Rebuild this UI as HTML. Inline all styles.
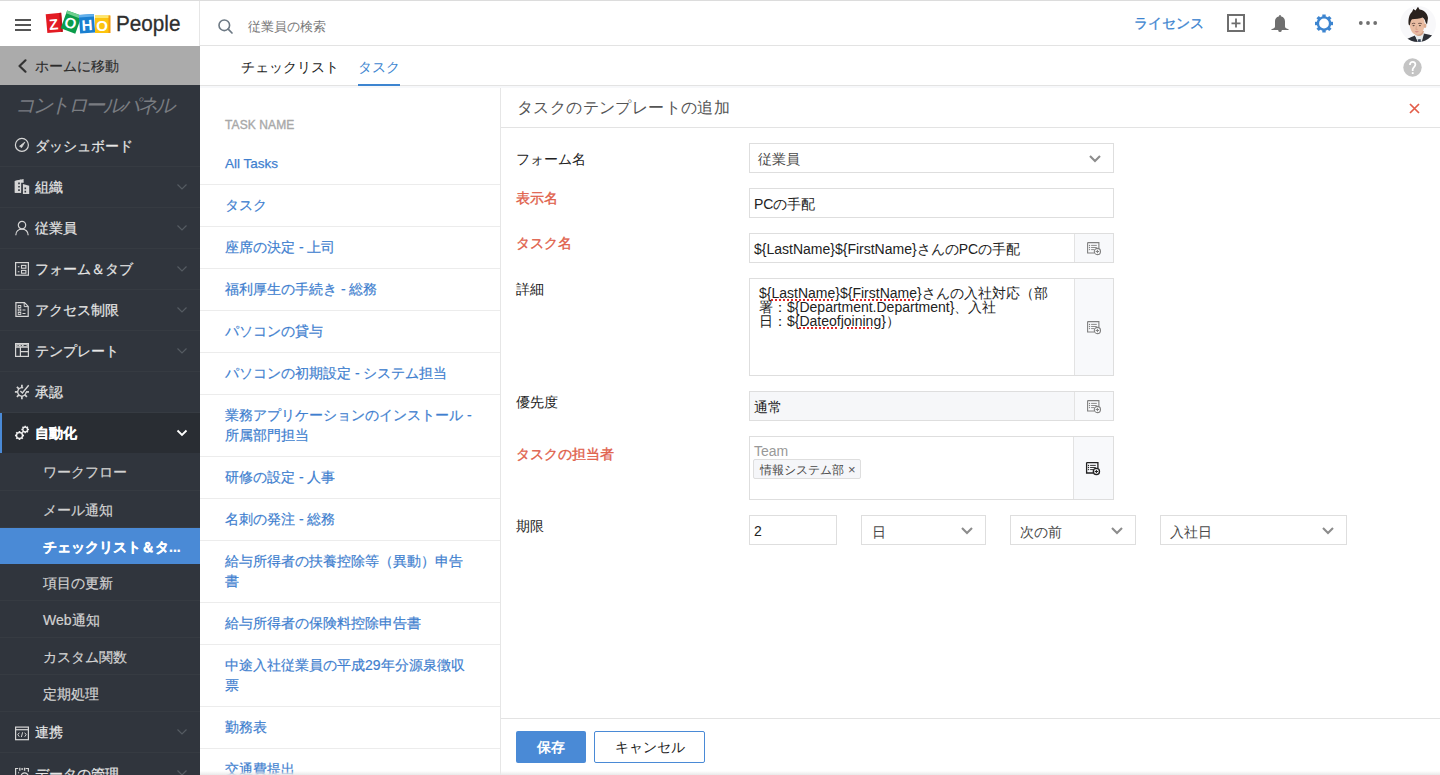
<!DOCTYPE html>
<html lang="ja"><head><meta charset="utf-8">
<style>
*{box-sizing:border-box;margin:0;padding:0}
html,body{width:1440px;height:775px;overflow:hidden;background:#fff;font-family:"Liberation Sans",sans-serif;color:#222}
.a{position:absolute;white-space:nowrap}
svg{position:absolute;display:block;overflow:visible}
#topline{position:absolute;left:0;top:0;width:1440px;height:1px;background:#dcdcdc;z-index:5}
/* sidebar */
#side{position:absolute;left:0;top:0;width:200px;height:775px;background:#30353d;overflow:hidden}
#logo{position:absolute;left:0;top:0;width:200px;height:46px;background:#fff;border-right:1px solid #e6e6e6}
#home{position:absolute;left:0;top:46px;width:200px;height:39px;background:#ababab;color:#2b2b2b;font-size:14px;-webkit-text-stroke:0.15px #2b2b2b}
#home span{position:absolute;left:35px;top:12px;white-space:nowrap}
#cp{position:absolute;left:15px;top:92px;font-size:20px;letter-spacing:-2.5px;font-style:italic;color:#797c81;white-space:nowrap}
.mi{position:absolute;left:0;width:200px;height:41px;border-bottom:1px solid #363b42;color:#e6e6e6;font-size:14px}
.mi .t{position:absolute;left:35px;top:12px;white-space:nowrap;-webkit-text-stroke:0.2px currentColor}
.mi svg.ic{left:15px;top:12px;width:14px;height:15px}
.mi svg.ch{left:177px;top:17px;width:10px;height:6px}
.si{position:absolute;left:0;width:200px;height:37px;border-bottom:1px solid #363b42;color:#d2d2d2;font-size:14px}
.si .t{position:absolute;left:43px;top:11px;white-space:nowrap;-webkit-text-stroke:0.2px currentColor}
/* header */
#hdr{position:absolute;left:200px;top:0;width:1240px;height:46px;border-bottom:1px solid #e3e3e3;background:#fff}
#tabs{position:absolute;left:200px;top:46px;width:1240px;height:40px;border-bottom:1px solid #e3e3e3;background:#fff}
/* list */
#list{position:absolute;left:200px;top:86px;width:301px;height:689px;border-right:1px solid #e6e6e6;background:#fff;overflow:hidden}
.li{position:absolute;left:0;width:300px;border-bottom:1px solid #ececec;color:#3f7fcf;font-size:14px;line-height:20px;-webkit-text-stroke:0.2px #3f7fcf}
.li span{position:absolute;left:25px;top:10px;white-space:nowrap}
/* form */
.lbl{position:absolute;left:516px;font-size:14px;color:#222;white-space:nowrap}
.req{color:#e0604a;-webkit-text-stroke:0.35px #e0604a}
.box{position:absolute;border:1px solid #dedede;background:#fff;font-size:14px;color:#222}
.box .v{position:absolute;left:4px;white-space:nowrap}
.add{position:absolute;right:0;top:0;bottom:0;width:39px;border-left:1px solid #e3e3e3;background:#f8f9fb}
.add svg{left:12px;width:14px;height:14px}
.sel svg{width:12px;height:7px}
u{text-decoration:underline dotted #e02828;text-decoration-thickness:2px;text-underline-offset:1px}
</style></head><body>
<div id="topline"></div>
<div id="side">
  <div id="logo">
    <div class="a" style="left:15px;top:19px;width:16px;height:2px;background:#555"></div>
    <div class="a" style="left:15px;top:24px;width:16px;height:2px;background:#555"></div>
    <div class="a" style="left:15px;top:29px;width:16px;height:2px;background:#555"></div>
    <svg style="left:46px;top:10px;width:66px;height:25px" viewBox="0 0 66 25">
      <g transform="rotate(-5 8 13)"><rect x="0.5" y="3.5" width="15.5" height="19" fill="#e31b23"/><rect x="14" y="3.5" width="2" height="19" fill="#b8121a"/><text x="7.6" y="19.6" font-size="15" font-weight="bold" fill="#fff" text-anchor="middle" font-family="Liberation Sans">Z</text></g>
      <g transform="rotate(20 25 12)"><rect x="17.5" y="2.5" width="15.5" height="19" fill="#0a9c4a"/><rect x="17.5" y="2.5" width="15.5" height="3" fill="#6fcf8f"/><text x="25" y="18.5" font-size="15" font-weight="bold" fill="#fff" text-anchor="middle" font-family="Liberation Sans">O</text></g>
      <g transform="rotate(-4 41 14)"><rect x="33.5" y="4.5" width="15" height="18.5" fill="#1a7fd0"/><rect x="33.5" y="4.5" width="15" height="2.5" fill="#62b0ec"/><text x="41" y="20.3" font-size="15" font-weight="bold" fill="#fff" text-anchor="middle" font-family="Liberation Sans">H</text></g>
      <rect x="49" y="5.5" width="15" height="17.5" fill="#fcc40f"/><rect x="49" y="5.5" width="15" height="2.5" fill="#fde66a"/><rect x="62.5" y="5.5" width="2" height="17.5" fill="#f39a0e"/><text x="56" y="20.5" font-size="15" font-weight="bold" fill="#fff" text-anchor="middle" font-family="Liberation Sans">O</text>
    </svg>
    <div class="a" style="left:116px;top:11px;font-size:22px;color:#2e2e2e;transform:scaleX(0.94);transform-origin:0 0;-webkit-text-stroke:0.3px #2e2e2e">People</div>
  </div>
  <div id="home">
    <svg style="left:17px;top:13px;width:10px;height:14px" viewBox="0 0 10 14"><path d="M8.5 1.3L2.5 7L8.5 12.7" fill="none" stroke="#333" stroke-width="2.2" stroke-linecap="round" stroke-linejoin="round"/></svg>
    <span>ホームに移動</span></div>
  <div id="cp">コントロールパネル</div>
  <div class="mi" style="top:126px">
    <svg class="ic" viewBox="0 0 14 15"><circle cx="6.9" cy="6.9" r="6.5" fill="none" stroke="#d6d6d6" stroke-width="1.2"/><path d="M4.6 8.2L9.9 4.1L6.6 9.6Z" fill="#d6d6d6" stroke="#d6d6d6" stroke-width="0.8" stroke-linejoin="round"/></svg>
    <span class="t">ダッシュボード</span></div>
  <div class="mi" style="top:167px">
    <svg class="ic" viewBox="0 0 14 15"><path d="M-0.2 2L6.1 0.6V2.8H8.6V0H8.6V3.4H6.1V13.7H-0.2Z" fill="#d6d6d6"/><path d="M-0.2 2L8.6 0V3.4H6.1V13.7H-0.2Z" fill="#d6d6d6"/><path d="M7.9 5L14.2 6.8V15H7.9Z" fill="#d6d6d6"/><path d="M3.2 3.6h1.6v1.6h-1.6zM3.2 7h1.6v1.6h-1.6zM3.2 10.3h1.6v1.6h-1.6zM9.5 8.6h1.6v1.6h-1.6zM9.5 11.8h1.6v1.6h-1.6z" fill="#31363d"/></svg>
    <span class="t">組織</span><svg class="ch" viewBox="0 0 10 6"><path d="M0.5 0.5L5 5L9.5 0.5" fill="none" stroke="#555b62" stroke-width="1.2"/></svg></div>
  <div class="mi" style="top:208px">
    <svg class="ic" viewBox="0 0 14 15"><circle cx="7" cy="5.1" r="3.7" fill="none" stroke="#d6d6d6" stroke-width="1.2"/><path d="M0.8 15.2C0.8 11.3 3.5 9.1 7 9.1S13.2 11.3 13.2 15.2" fill="none" stroke="#d6d6d6" stroke-width="1.2"/></svg>
    <span class="t">従業員</span><svg class="ch" viewBox="0 0 10 6"><path d="M0.5 0.5L5 5L9.5 0.5" fill="none" stroke="#555b62" stroke-width="1.2"/></svg></div>
  <div class="mi" style="top:249px">
    <svg class="ic" viewBox="0 0 14 15"><rect x="0.6" y="1.6" width="12.8" height="12.6" fill="none" stroke="#d6d6d6" stroke-width="1.2"/><rect x="6.5" y="4.4" width="4.4" height="2.8" fill="none" stroke="#d6d6d6" stroke-width="1.1"/><rect x="6.5" y="9.4" width="4.4" height="2.8" fill="none" stroke="#d6d6d6" stroke-width="1.1"/><path d="M2.8 5.8h1.6M2.8 10.8h1.6" stroke="#d6d6d6" stroke-width="1.1"/></svg>
    <span class="t">フォーム＆タブ</span><svg class="ch" viewBox="0 0 10 6"><path d="M0.5 0.5L5 5L9.5 0.5" fill="none" stroke="#555b62" stroke-width="1.2"/></svg></div>
  <div class="mi" style="top:290px">
    <svg class="ic" viewBox="0 0 14 15"><path d="M0.9 0.7H9.5L13.2 4.4V14.3H0.9Z" fill="none" stroke="#d6d6d6" stroke-width="1.2"/><path d="M9.2 0.7V4.6H13.2" fill="none" stroke="#d6d6d6" stroke-width="1"/><rect x="3.2" y="3.5" width="2.6" height="2" fill="none" stroke="#d6d6d6" stroke-width="0.9"/><rect x="3.2" y="7" width="2.6" height="2" fill="none" stroke="#d6d6d6" stroke-width="0.9"/><rect x="3.2" y="10.5" width="2.6" height="2" fill="none" stroke="#d6d6d6" stroke-width="0.9"/><path d="M7.5 8h3M7.5 11.5h3" stroke="#d6d6d6" stroke-width="1"/></svg>
    <span class="t">アクセス制限</span><svg class="ch" viewBox="0 0 10 6"><path d="M0.5 0.5L5 5L9.5 0.5" fill="none" stroke="#555b62" stroke-width="1.2"/></svg></div>
  <div class="mi" style="top:331px">
    <svg class="ic" viewBox="0 0 14 15"><rect x="0.6" y="0.6" width="12.8" height="12.8" fill="none" stroke="#d6d6d6" stroke-width="1.2"/><path d="M0.6 4.2H13.4M5.4 4.2V13.4M5.4 8.7H13.4" fill="none" stroke="#d6d6d6" stroke-width="1.2"/><path d="M1.2 1.2H12.8V3.6H1.2Z" fill="#d6d6d6"/><path d="M2.6 2.1h1v1h-1zM5.8 2.1h1v1h-1zM8.6 2.1h3v1h-3z" fill="#31363d"/></svg>
    <span class="t">テンプレート</span><svg class="ch" viewBox="0 0 10 6"><path d="M0.5 0.5L5 5L9.5 0.5" fill="none" stroke="#555b62" stroke-width="1.2"/></svg></div>
  <div class="mi" style="top:372px">
    <svg class="ic" style="top:13px" viewBox="0 0 14 15"><path d="M8.2 2.9A4.2 4.2 0 1 0 11.1 7" fill="none" stroke="#d6d6d6" stroke-width="1.3"/><g stroke="#d6d6d6" stroke-width="1.7"><path d="M6.9 -0.3V2.8"/><path d="M6.9 11V14.3"/><path d="M-0.1 6.9H2.8"/><path d="M11 6.9H14"/><path d="M1.9 1.9L3.9 3.9"/><path d="M1.9 11.9L3.9 9.9"/><path d="M11.9 11.9L9.9 9.9"/></g><path d="M5.4 6.1L7.4 7.9L13.7 0.3" fill="none" stroke="#d6d6d6" stroke-width="1.4"/></svg>
    <span class="t">承認</span></div>
  <div class="mi" style="top:413px;height:40px;border:0;background:#292d33;color:#fff;font-weight:bold">
    <div class="a" style="left:0;top:0;width:2px;height:40px;background:#4a8ad6"></div>
    <svg class="ic" style="top:13px" viewBox="0 0 14 15"><path fill-rule="evenodd" fill="#f0f0f0" d="M3.69 4.97 L5.31 4.97 L5.38 5.91 L6.41 6.33 L7.13 5.73 L8.27 6.87 L7.67 7.59 L8.09 8.62 L9.03 8.69 L9.03 10.31 L8.09 10.38 L7.67 11.41 L8.27 12.13 L7.13 13.27 L6.41 12.67 L5.38 13.09 L5.31 14.03 L3.69 14.03 L3.62 13.09 L2.59 12.67 L1.87 13.27 L0.73 12.13 L1.33 11.41 L0.91 10.38 L-0.03 10.31 L-0.03 8.69 L0.91 8.62 L1.33 7.59 L0.73 6.87 L1.87 5.73 L2.59 6.33 L3.62 5.91Z M4.5 7.2A2.3 2.3 0 1 0 4.5 11.8A2.3 2.3 0 1 0 4.5 7.2Z"/><path fill-rule="evenodd" fill="#f0f0f0" d="M9.51 -0.34 L10.89 -0.34 L10.94 0.49 L11.80 0.85 L12.43 0.30 L13.40 1.27 L12.85 1.90 L13.21 2.76 L14.04 2.81 L14.04 4.19 L13.21 4.24 L12.85 5.10 L13.40 5.73 L12.43 6.70 L11.80 6.15 L10.94 6.51 L10.89 7.34 L9.51 7.34 L9.46 6.51 L8.60 6.15 L7.97 6.70 L7.00 5.73 L7.55 5.10 L7.19 4.24 L6.36 4.19 L6.36 2.81 L7.19 2.76 L7.55 1.90 L7.00 1.27 L7.97 0.30 L8.60 0.85 L9.46 0.49Z M10.2 1.8A1.7 1.7 0 1 0 10.2 5.2A1.7 1.7 0 1 0 10.2 1.8Z"/></svg>
    <span class="t">自動化</span><svg class="ch" style="top:17px" viewBox="0 0 10 6"><path d="M0.5 0.5L5 5L9.5 0.5" fill="none" stroke="#fff" stroke-width="1.8"/></svg></div>
  <div class="si" style="top:453px;height:38px;padding-top:1px"><span class="t">ワークフロー</span></div>
  <div class="si" style="top:491px"><span class="t">メール通知</span></div>
  <div class="si" style="top:528px;height:36px;background:#4a8ad6;border:0;color:#fff;font-weight:bold"><span class="t">チェックリスト＆タ...</span></div>
  <div class="si" style="top:564px"><span class="t">項目の更新</span></div>
  <div class="si" style="top:601px"><span class="t">Web通知</span></div>
  <div class="si" style="top:638px"><span class="t">カスタム関数</span></div>
  <div class="si" style="top:675px"><span class="t">定期処理</span></div>
  <div class="mi" style="top:712px">
    <svg class="ic" style="top:14px" viewBox="0 0 14 14"><rect x="0.6" y="0.6" width="12.8" height="12.6" fill="none" stroke="#d6d6d6" stroke-width="1.2"/><path d="M0.6 3.2H13.4" stroke="#d6d6d6" stroke-width="1.2"/><path d="M4.3 6.2L2.8 8.2L4.3 10.2M9.7 6.2L11.2 8.2L9.7 10.2M7.6 5.8L6.4 10.6" fill="none" stroke="#d6d6d6" stroke-width="1"/></svg>
    <span class="t">連携</span><svg class="ch" viewBox="0 0 10 6"><path d="M0.5 0.5L5 5L9.5 0.5" fill="none" stroke="#555b62" stroke-width="1.2"/></svg></div>
  <div class="mi" style="top:753px">
    <svg class="ic" style="top:14px" viewBox="0 0 14 14"><path d="M0.6 16V1H3.2M10.6 1H13.4V4.2" fill="none" stroke="#d6d6d6" stroke-width="1.2"/><path d="M4.8 0.3V3.2M9.6 0.3V3.2M6.3 1.5H8.1" fill="none" stroke="#d6d6d6" stroke-width="1.3"/><path d="M3.6 4.4V5.9" stroke="#d6d6d6" stroke-width="0.8"/><circle cx="9.6" cy="9" r="3.6" fill="none" stroke="#d6d6d6" stroke-width="1.2"/></svg>
    <span class="t" style="top:13px">データの管理</span><svg class="ch" viewBox="0 0 10 6"><path d="M0.5 0.5L5 5L9.5 0.5" fill="none" stroke="#555b62" stroke-width="1.2"/></svg></div>
</div>
<div id="hdr">
  <svg style="left:18px;top:19px;width:15px;height:15px" viewBox="0 0 15 15"><circle cx="6.3" cy="6.3" r="5.3" fill="none" stroke="#6d7984" stroke-width="1.6"/><path d="M10.2 10.2L14 14" stroke="#6d7984" stroke-width="1.7" stroke-linecap="round"/></svg>
  <div class="a" style="left:48px;top:18px;font-size:13px;color:#777">従業員の検索</div>
  <div class="a" style="left:934px;top:15px;font-size:14px;color:#3d85d0;-webkit-text-stroke:0.3px #3d85d0">ライセンス</div>
  <svg style="left:1027px;top:14px;width:18px;height:18px" viewBox="0 0 18 18"><rect x="1" y="1" width="16" height="16" fill="none" stroke="#6e6e6e" stroke-width="2"/><path d="M9 4.5V13.5M4.5 9.3H13.5" stroke="#6e6e6e" stroke-width="1.8"/></svg>
  <svg style="left:1071px;top:15px;width:18px;height:18px" viewBox="0 0 18 18"><rect x="8.2" y="0" width="1.6" height="2" rx="0.6" fill="#6f6f6f"/><path d="M4 11.5V6.6C4 3.4 6.2 1.3 9 1.3S14 3.4 14 6.6V11.5C14 12.9 15.6 13.8 17.6 14.3V14.9H0.4V14.3C2.4 13.8 4 12.9 4 11.5Z" fill="#6f6f6f"/><ellipse cx="9" cy="15.6" rx="1.7" ry="1.5" fill="#6f6f6f"/></svg>
  <svg style="left:1115px;top:14px;width:18px;height:19px" viewBox="0 0 18 18.6"><g fill="#3d85d0" transform="translate(0 0.3)"><rect x="7.3" y="0" width="3.4" height="3.2"/><rect x="7.3" y="0" width="3.4" height="3.2" transform="rotate(45 9 9)"/><rect x="7.3" y="0" width="3.4" height="3.2" transform="rotate(90 9 9)"/><rect x="7.3" y="0" width="3.4" height="3.2" transform="rotate(135 9 9)"/><rect x="7.3" y="0" width="3.4" height="3.2" transform="rotate(180 9 9)"/><rect x="7.3" y="0" width="3.4" height="3.2" transform="rotate(225 9 9)"/><rect x="7.3" y="0" width="3.4" height="3.2" transform="rotate(270 9 9)"/><rect x="7.3" y="0" width="3.4" height="3.2" transform="rotate(315 9 9)"/><circle cx="9" cy="9" r="6.1" fill="none" stroke="#3d85d0" stroke-width="2.4"/></g></svg>
  <svg style="left:1158px;top:20px;width:20px;height:6px" viewBox="0 0 20 6"><circle cx="2.8" cy="3" r="1.9" fill="#707070"/><circle cx="10" cy="3" r="1.9" fill="#707070"/><circle cx="17.2" cy="3" r="1.9" fill="#707070"/></svg>
  <div class="a" style="left:1200px;top:6px;width:36px;height:36px;border-radius:50%;overflow:hidden"><svg style="left:0;top:0;width:36px;height:36px" viewBox="0 0 36 36">
    <rect width="36" height="36" fill="#f8f8fa"/>
    <path d="M5 37L7 33C10 31.5 13 30.5 15 29.5L18 36L23.5 27.5C27 28.3 30 28.8 32.5 29.5L37 37Z" fill="#2d3037"/>
    <path d="M15 29.5L18.5 37H21.5L24 27.5L21.5 27Z" fill="#e8ecee"/><path d="M17.6 33.5L18.6 37H21L20.6 33Z" fill="#3b475a"/>
    <path d="M13.5 25C14 28 16.5 30 19 30S23.5 28 24 25Z" fill="#d3a186"/>
    <path d="M9.6 17C9.6 12 12.6 10 17 10S24.6 12 24.6 17C24.6 24 21.9 28.8 17.3 28.8S9.6 24 9.6 17Z" fill="#e9bca2"/>
    <ellipse cx="25" cy="19.8" rx="1.4" ry="2.3" fill="#dcab8e"/>
    <path d="M11.8 17.8Q13.5 16.9 15.2 17.5M18.2 17.5Q20 16.9 21.8 17.7" fill="none" stroke="#6a4d44" stroke-width="0.9"/>
    <ellipse cx="13.6" cy="19.6" rx="1.1" ry="0.6" fill="#57463f"/><ellipse cx="19.9" cy="19.6" rx="1.1" ry="0.6" fill="#57463f"/>
    <path d="M16.4 20.2L15.9 23.4H17.7" fill="none" stroke="#cf9a7f" stroke-width="0.7"/>
    <path d="M14.6 25.6C15.6 25 17.8 25 19 25.6C18 26.7 15.6 26.7 14.6 25.6Z" fill="#cc7c80"/>
    <path d="M8.6 18.5C8 12.5 9.5 8 12 6L13.4 3L15.5 4.5L18 0.8L19.5 3.5C23.5 3.8 27.5 7 28 12L27 18.5L25.5 16.2C25 13.6 24 12 22.5 11.4C20 12.5 15.5 12.8 12 13.2C10.8 14.5 10.2 16.5 9.8 19.5Z" fill="#2a221e"/>
    </svg></div>
</div>
<div id="tabs">
  <div class="a" style="left:41px;top:13px;font-size:14px;color:#1e1e1e;letter-spacing:0px">チェックリスト</div>
  <div class="a" style="left:158px;top:13px;font-size:14px;color:#3d85d0;letter-spacing:0.1px">タスク</div>
  <div class="a" style="left:158px;top:38px;width:42px;height:2px;background:#3d85d0"></div>
  <svg style="left:1203px;top:12px;width:19px;height:19px" viewBox="0 0 19 19"><circle cx="9.5" cy="9.5" r="9.2" fill="#c4c4c4"/><path d="M6.9 6.9C6.9 4.9 8.1 3.9 9.7 3.9S12.4 5 12.4 6.6C12.4 8.6 10 9.3 9.7 11.2V13" fill="none" stroke="#fff" stroke-width="1.7"/><rect x="8.8" y="14.2" width="1.8" height="1.8" fill="#fff"/></svg>
</div>
<div id="list">
  <div class="a" style="left:25px;top:32px;font-size:12px;color:#a8a8a8;-webkit-text-stroke:0.35px #a8a8a8;letter-spacing:0.1px">TASK NAME</div>
  <div class="li" style="top:56px;height:43px"><span style="top:12px;font-size:13.5px;-webkit-text-stroke:0.25px #3f7fcf">All Tasks</span></div>
  <div class="li" style="top:99px;height:42px"><span>タスク</span></div>
  <div class="li" style="top:141px;height:42px"><span>座席の決定 - 上司</span></div>
  <div class="li" style="top:183px;height:42px"><span>福利厚生の手続き - 総務</span></div>
  <div class="li" style="top:225px;height:42px"><span>パソコンの貸与</span></div>
  <div class="li" style="top:267px;height:42px"><span>パソコンの初期設定 - システム担当</span></div>
  <div class="li" style="top:309px;height:62px"><span>業務アプリケーションのインストール -<br>所属部門担当</span></div>
  <div class="li" style="top:371px;height:42px"><span>研修の設定 - 人事</span></div>
  <div class="li" style="top:413px;height:42px"><span>名刺の発注 - 総務</span></div>
  <div class="li" style="top:455px;height:62px"><span>給与所得者の扶養控除等（異動）申告<br>書</span></div>
  <div class="li" style="top:517px;height:42px"><span>給与所得者の保険料控除申告書</span></div>
  <div class="li" style="top:559px;height:62px"><span>中途入社従業員の平成29年分源泉徴収<br>票</span></div>
  <div class="li" style="top:621px;height:42px"><span>勤務表</span></div>
  <div class="li" style="top:663px;height:42px"><span>交通費提出</span></div>
</div>
<!-- form panel -->
<div class="a" style="left:200px;top:86px;width:1240px;height:2px;background:#f7f8fa"></div>
<div class="a" style="left:501px;top:127px;width:939px;height:1px;background:#e3e3e3"></div>
<div class="a" style="left:517px;top:98px;font-size:16px;color:#555;letter-spacing:0.4px">タスクのテンプレートの追加</div>
<svg style="left:1409px;top:103px;width:11px;height:11px" viewBox="0 0 11 11"><path d="M1 1L10 10M10 1L1 10" stroke="#e35d49" stroke-width="1.7"/></svg>

<div class="lbl" style="top:151px">フォーム名</div>
<div class="box sel" style="left:749px;top:143px;width:365px;height:30px"><span class="v" style="left:8px;top:7px;color:#4a4a4a">従業員</span><svg style="left:339px;top:11px" viewBox="0 0 12 7"><path d="M1 1L6 6L11 1" fill="none" stroke="#8c8c8c" stroke-width="2.1"/></svg></div>

<div class="lbl req" style="top:190px">表示名</div>
<div class="box" style="left:749px;top:188px;width:365px;height:30px"><span class="v" style="top:7px">PCの手配</span></div>

<div class="lbl req" style="top:235px">タスク名</div>
<div class="box" style="left:749px;top:233px;width:365px;height:30px"><span class="v" style="top:7px">${LastName}${FirstName}さんのPCの手配</span><div class="add"><svg style="top:7px" viewBox="0 0 14 14"><path d="M0.6 1.6H11.9V7.6M0.6 1.6V12H7" fill="none" stroke="#808080" stroke-width="1.1"/><g fill="#808080"><circle cx="2.5" cy="4.4" r="0.7"/><circle cx="2.5" cy="6.5" r="0.7"/><circle cx="2.5" cy="8.6" r="0.7"/></g><path d="M4.1 4.4H9.8M4.1 6.5H9.8M4.1 8.6H7.5" stroke="#808080" stroke-width="0.9"/><circle cx="10.4" cy="10.5" r="3.1" fill="#f8f9fb" stroke="#808080" stroke-width="1.1"/><path d="M8.7 10.5H12.1M10.4 8.8V12.2" stroke="#808080" stroke-width="1"/></svg></div></div>

<div class="lbl" style="top:281px">詳細</div>
<div class="box" style="left:749px;top:278px;width:365px;height:98px"><div class="a" style="left:9px;top:7px;font-size:14px;line-height:14px;color:#222;white-space:normal;width:320px">${<u>LastName</u>}${<u>FirstName</u>}さんの入社対応（部<br>署：${Department.Department}、入社<br>日：${<u>Dateofjoining</u>}）</div><div class="add"><svg style="top:41px" viewBox="0 0 14 14"><path d="M0.6 1.6H11.9V7.6M0.6 1.6V12H7" fill="none" stroke="#808080" stroke-width="1.1"/><g fill="#808080"><circle cx="2.5" cy="4.4" r="0.7"/><circle cx="2.5" cy="6.5" r="0.7"/><circle cx="2.5" cy="8.6" r="0.7"/></g><path d="M4.1 4.4H9.8M4.1 6.5H9.8M4.1 8.6H7.5" stroke="#808080" stroke-width="0.9"/><circle cx="10.4" cy="10.5" r="3.1" fill="#f8f9fb" stroke="#808080" stroke-width="1.1"/><path d="M8.7 10.5H12.1M10.4 8.8V12.2" stroke="#808080" stroke-width="1"/></svg></div></div>

<div class="lbl" style="top:394px">優先度</div>
<div class="box" style="left:749px;top:391px;width:365px;height:30px;background:#f6f7f9"><span class="v" style="top:7px">通常</span><div class="add"><svg style="top:7px" viewBox="0 0 14 14"><path d="M0.6 1.6H11.9V7.6M0.6 1.6V12H7" fill="none" stroke="#808080" stroke-width="1.1"/><g fill="#808080"><circle cx="2.5" cy="4.4" r="0.7"/><circle cx="2.5" cy="6.5" r="0.7"/><circle cx="2.5" cy="8.6" r="0.7"/></g><path d="M4.1 4.4H9.8M4.1 6.5H9.8M4.1 8.6H7.5" stroke="#808080" stroke-width="0.9"/><circle cx="10.4" cy="10.5" r="3.1" fill="#f8f9fb" stroke="#808080" stroke-width="1.1"/><path d="M8.7 10.5H12.1M10.4 8.8V12.2" stroke="#808080" stroke-width="1"/></svg></div></div>

<div class="lbl req" style="top:446px">タスクの担当者</div>
<div class="box" style="left:749px;top:436px;width:365px;height:64px"><span class="v" style="top:6px;color:#999">Team</span>
  <div class="a" style="left:3px;top:22px;width:108px;height:20px;background:#f5f6f9;border:1px solid #dedede;border-radius:2px;font-size:12px;color:#474747"><span class="a" style="left:6px;top:2px">情報システム部</span><span class="a" style="left:94px;top:2px;font-size:13px;color:#555">×</span></div>
  <div class="add" style="width:40px"><svg style="top:24px" viewBox="0 0 14 14"><path d="M0.6 1.6H11.9V7.6M0.6 1.6V12H7" fill="none" stroke="#222" stroke-width="1.3"/><g fill="#222"><circle cx="2.5" cy="4.4" r="0.7"/><circle cx="2.5" cy="6.5" r="0.7"/><circle cx="2.5" cy="8.6" r="0.7"/></g><path d="M4.1 4.4H9.8M4.1 6.5H9.8M4.1 8.6H7.5" stroke="#222" stroke-width="0.9"/><circle cx="10.4" cy="10.5" r="3.1" fill="#f8f9fb" stroke="#222" stroke-width="1.3"/><path d="M8.7 10.5H12.1M10.4 8.8V12.2" stroke="#222" stroke-width="1"/></svg></div></div>

<div class="lbl" style="top:518px">期限</div>
<div class="box" style="left:749px;top:515px;width:88px;height:30px"><span class="v" style="top:7px">2</span></div>
<div class="box sel" style="left:861px;top:515px;width:125px;height:30px"><span class="v" style="left:10px;top:8px;color:#4a4a4a">日</span><svg style="left:99px;top:11px" viewBox="0 0 12 7"><path d="M1 1L6 6L11 1" fill="none" stroke="#8c8c8c" stroke-width="2.1"/></svg></div>
<div class="box sel" style="left:1010px;top:515px;width:126px;height:30px"><span class="v" style="left:9px;top:8px;color:#4a4a4a">次の前</span><svg style="left:100px;top:11px" viewBox="0 0 12 7"><path d="M1 1L6 6L11 1" fill="none" stroke="#8c8c8c" stroke-width="2.1"/></svg></div>
<div class="box sel" style="left:1160px;top:515px;width:187px;height:30px"><span class="v" style="left:9px;top:8px;color:#4a4a4a">入社日</span><svg style="left:161px;top:11px" viewBox="0 0 12 7"><path d="M1 1L6 6L11 1" fill="none" stroke="#8c8c8c" stroke-width="2.1"/></svg></div>

<div class="a" style="left:501px;top:718px;width:939px;height:1px;background:#e3e3e3"></div>
<div class="a" style="left:516px;top:731px;width:70px;height:32px;background:#4a8ad6;border-radius:2px;color:#fff;font-weight:bold;font-size:14px;text-align:center;line-height:32px">保存</div>
<div class="a" style="left:594px;top:731px;width:111px;height:32px;background:#fff;border:1px solid #4a8ad6;border-radius:2px;color:#222;font-size:14px;text-align:center;line-height:30px">キャンセル</div>
<div class="a" style="left:200px;top:771px;width:1240px;height:4px;background:linear-gradient(#fff0,#e9e9e9)"></div>
</body></html>
